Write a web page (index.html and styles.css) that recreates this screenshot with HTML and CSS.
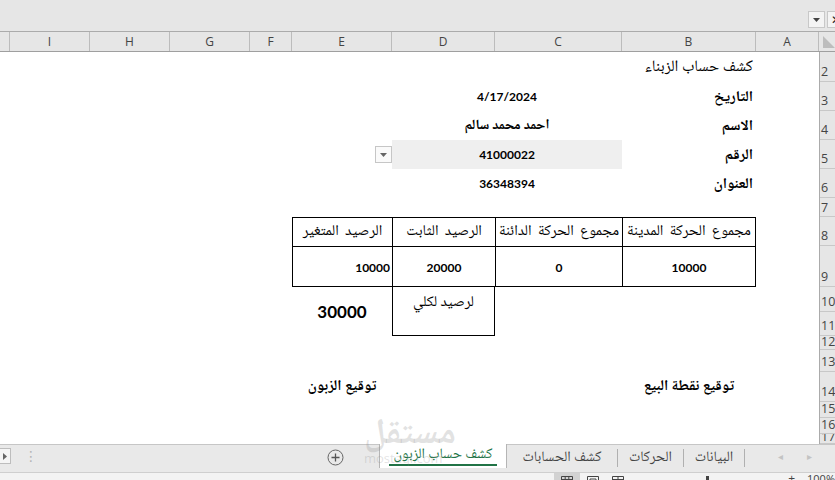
FILE: index.html
```html
<!DOCTYPE html>
<html lang="ar">
<head>
<meta charset="utf-8">
<title>كشف حساب الزبون</title>
<link rel="stylesheet" href="styles.css">
</head>
<body>
<div class="app">
  <div class="fbar">
    <div class="fspacer"></div>
    <div class="fbox"><svg width="7" height="4" viewBox="0 0 7 4"><path d="M0 0H7L3.5 4Z" fill="#444"/></svg></div>
    <div class="fbox x">✕</div>
  </div>

  <div class="colhead">
    <div class="ch"></div>
    <div class="ch">I</div>
    <div class="ch">H</div>
    <div class="ch">G</div>
    <div class="ch">F</div>
    <div class="ch">E</div>
    <div class="ch">D</div>
    <div class="ch">C</div>
    <div class="ch">B</div>
    <div class="ch">A</div>
    <div class="corner"><svg width="14" height="14" viewBox="0 0 14 14"><path d="M2 2L14 14H2Z" fill="#bdbdbd"/></svg></div>
  </div>

  <div class="body">
    <div class="sheet">
      <div class="cell c-b r2 title ar">كشف حساب الزبناء</div>

      <div class="cell c-b r3 lbl ar">التاريخ</div>
      <div class="cell c-cd r3 val num">4/17/2024</div>

      <div class="cell c-b r4 lbl ar">الاسم</div>
      <div class="cell c-cd r4 val arb">احمد محمد سالم</div>

      <div class="cell c-b r5 lbl ar">الرقم</div>
      <div class="cell c-cd r5 val num sel">41000022</div>
      <div class="cell c-e r5 ddcell"><div class="dd"><svg width="7" height="4" viewBox="0 0 7 4"><path d="M0 0H7L3.5 4Z" fill="#666"/></svg></div></div>

      <div class="cell c-b r6 lbl ar">العنوان</div>
      <div class="cell c-cd r6 val num">36348394</div>

      <div class="cell c-e r8 th bd ar">الرصيد المتغير</div>
      <div class="cell c-d r8 th bd ar">الرصيد الثابت</div>
      <div class="cell c-c r8 th bd ar">مجموع الحركة الدائنة</div>
      <div class="cell c-b r8 th bd bdr ar">مجموع الحركة المدينة</div>

      <div class="cell c-e r9 td bd bdb num right">10000</div>
      <div class="cell c-d r9 td bd bdb num">20000</div>
      <div class="cell c-c r9 td bd bdb num">0</div>
      <div class="cell c-b r9 td bd bdb bdr num">10000</div>

      <div class="cell c-e r1011 total num">30000</div>
      <div class="cell c-d r1011 box ar">لرصيد لكلي</div>

      <div class="cell c-b r14 sig ar">توقيع نقطة البيع</div>
      <div class="cell c-e r14 sig ar">توقيع الزبون</div>
    </div>

    <div class="rowhead">
      <div class="rh h30">2</div>
      <div class="rh h29">3</div>
      <div class="rh h29">4</div>
      <div class="rh h29">5</div>
      <div class="rh h29">6</div>
      <div class="rh h19">7</div>
      <div class="rh h29">8</div>
      <div class="rh h41">9</div>
      <div class="rh h25">10</div>
      <div class="rh h24">11</div>
      <div class="rh h14">12</div>
      <div class="rh h22">13</div>
      <div class="rh h30">14</div>
      <div class="rh h16">15</div>
      <div class="rh h16">16</div>
      <div class="rh h10">17</div>
    </div>
  </div>

  <div class="tabs">
    <div class="navbox"><svg width="4" height="7" viewBox="0 0 4 7"><path d="M0 0L4 3.5L0 7Z" fill="#666"/></svg></div>
    <div class="dots">⋮</div>
    <div class="tspacer"></div>
    <div class="plus"><svg width="17" height="17" viewBox="0 0 17 17"><circle cx="8.5" cy="8.5" r="7.5" fill="none" stroke="#666" stroke-width="1"/><path d="M8.5 4.5V12.5M4.5 8.5H12.5" stroke="#555" stroke-width="1.3"/></svg></div>
    <div class="tab active ar"><span class="tlabel">كشف حساب الزبون</span></div>
    <div class="tab t1 ar"><span class="tlabel">كشف الحسابات</span></div>
    <div class="tab t2 ar"><span class="tlabel">الحركات</span></div>
    <div class="tab t3 ar"><span class="tlabel">البيانات</span></div>
    <div class="arrows"><span>◂</span><span>▸</span></div>
  </div>

  <div class="status">
    <div class="sspacer"></div>
    <div class="vbtn on"><svg width="12" height="10" viewBox="0 0 12 10"><path d="M0.5 0.5H11.5V10M0.5 0.5V10M4.2 0.5V10M7.8 0.5V10M0.5 3.5H11.5" fill="none" stroke="#444" stroke-width="1"/></svg></div>
    <div class="vbtn"><svg width="12" height="10" viewBox="0 0 12 10"><path d="M0.5 0.5H11.5V10M0.5 0.5V10M3 3H9V10M3 3V10" fill="none" stroke="#444" stroke-width="1"/></svg></div>
    <div class="vbtn"><svg width="12" height="10" viewBox="0 0 12 10"><path d="M0.5 0.5H11.5V10M0.5 0.5V10M6 0.5V10M0.5 3.5H11.5" fill="none" stroke="#444" stroke-width="1"/></svg></div>
    <div class="zoomline"><span class="thumb"></span></div>
    <div class="zplus">+</div>
    <div class="zpct">100%</div>
  </div>

  <div class="watermark"><div class="wm1 ar">مستقل</div><div class="wm2">mostaql.com</div></div>
</div>
</body>
</html>
```
FILE: styles.css
```css
* { box-sizing: border-box; }
html, body { margin: 0; padding: 0; }
body { width: 835px; height: 480px; overflow: hidden; background: #fff; }

.app {
  position: relative;
  width: 835px;
  height: 480px;
  overflow: hidden;
  display: flex;
  flex-direction: column;
  font-family: "Open Sans", "DejaVu Sans", sans-serif;
  color: #000;
}

.ar { font-family: "Noto Naskh Arabic", "Noto Sans Arabic", "DejaVu Sans", sans-serif; direction: rtl; }
.arb { font-family: "Noto Naskh Arabic", "Noto Sans Arabic", "DejaVu Sans", sans-serif; direction: rtl; font-weight: bold; font-size: 14px; }
.num { font-family: Lato, "Liberation Sans", sans-serif; font-weight: bold; font-size: 12px; }

/* formula bar strip */
.fbar {
  flex: 0 0 32px;
  background: #e6e6e6;
  border-bottom: 1px solid #ababab;
  display: flex;
  align-items: flex-start;
  padding-top: 11px;
  gap: 2px;
  margin-right: -14px;
}
.fspacer { flex: 1; }
.fbox {
  flex: 0 0 auto;
  width: 17px;
  height: 17px;
  border: 1px solid #c8c8c8;
  background: #f4f4f4;
  display: flex;
  align-items: center;
  justify-content: center;
}
.fbox.x { width: 22px; font-size: 12px; font-weight: bold; color: #222; justify-content: flex-start; padding-left: 3px; }

/* column headers */
.colhead {
  flex: 0 0 20px;
  display: grid;
  grid-template-columns: 10px 80px 80px 80px 42px 100px 103px 127px 134px 63px 30px;
  width: 849px;
  background: #e6e6e6;
  border-bottom: 1px solid #9f9f9f;
}
.ch {
  border-right: 1px solid #bcbcbc;
  font-size: 12px;
  color: #444;
  display: flex;
  align-items: center;
  justify-content: center;
}
.corner { display: flex; align-items: flex-start; padding-top: 2px; padding-left: 2px; }

/* body */
.body { flex: 0 0 392px; display: flex; width: 849px; }
.sheet {
  flex: 0 0 819px;
  display: grid;
  grid-template-columns: 10px 80px 80px 80px 42px 100px 103px 127px 134px 63px;
  grid-template-rows: 30px 29px 29px 29px 29px 19px 29px 41px 25px 24px 14px 22px 30px 16px 16px 10px;
  background: #fff;
}
.rowhead {
  flex: 0 0 30px;
  background: #e6e6e6;
  border-left: 1px solid #ababab;
  display: flex;
  flex-direction: column;
}
.rh {
  border-bottom: 1px solid #c8c8c8;
  font-size: 12.5px;
  color: #444;
  display: flex;
  align-items: flex-end;
  padding-left: 1px;
  padding-bottom: 3px;
  line-height: 1;
  overflow: hidden;
}
.h30 { height: 30px; } .h29 { height: 29px; } .h19 { height: 19px; padding-bottom: 2px; }
.h41 { height: 41px; } .h25 { height: 25px; } .h24 { height: 24px; } .h14 { height: 14px; padding-bottom: 1px; }
.h22 { height: 22px; } .h16 { height: 16px; padding-bottom: 2px; } .h10 { height: 10px; padding-bottom: 0; }

/* grid placement */
.c-b { grid-column: 9; }
.c-c { grid-column: 8; }
.c-d { grid-column: 7; }
.c-e { grid-column: 6; }
.c-cd { grid-column: 7 / 9; }
.r2 { grid-row: 1; } .r3 { grid-row: 2; } .r4 { grid-row: 3; } .r5 { grid-row: 4; } .r6 { grid-row: 5; }
.r8 { grid-row: 7; } .r9 { grid-row: 8; } .r1011 { grid-row: 9 / 11; } .r14 { grid-row: 13; }

.cell { display: flex; align-items: center; justify-content: center; white-space: nowrap; }

.title { justify-content: flex-start; padding-right: 3px; font-size: 16px; }
.lbl { justify-content: flex-start; padding-right: 3px; font-size: 15px; font-weight: bold; padding-top: 2px; }
.val { padding-top: 0; }
.sel { background: #efefef; }
.ddcell { justify-content: flex-end; align-items: flex-start; padding-top: 6px; }
.dd {
  width: 17px; height: 17px;
  border: 1px solid #c6c6c6;
  background: #fafafa;
  display: flex; align-items: center; justify-content: center;
}

.bd { border-top: 1px solid #000; border-left: 1px solid #000; }
.bdr { border-right: 1px solid #000; }
.bdb { border-bottom: 1px solid #000; }
.th { font-size: 15px; word-spacing: 3px; }
.right { justify-content: flex-start; direction: rtl; padding-right: 2px; }
.td { padding-top: 2px; }

.total { font-size: 17px; }
.box {
  border-left: 1px solid #000;
  border-right: 1px solid #000;
  border-bottom: 1px solid #000;
  align-items: flex-start;
  padding-top: 3px;
  font-size: 15px;
}
.sig { font-size: 15px; font-weight: bold; align-items: center; }

/* sheet tabs */
.tabs {
  flex: 0 0 28px;
  background: #e9e9e9;
  border-top: 1px solid #c6c6c6;
  display: flex;
  align-items: flex-start;
}
.navbox {
  flex: 0 0 auto;
  width: 11px; height: 16px;
  margin-top: 3px;
  border: 1px solid #bdbdbd;
  border-left: none;
  background: #f5f5f5;
  display: flex; align-items: center; justify-content: center;
}
.dots { margin-left: 13px; margin-top: 2px; color: #b5b5b5; font-size: 14px; line-height: 18px; }
.tspacer { flex: 1; }
.plus { margin-top: 4px; margin-right: 35px; display: flex; }
.tab {
  flex: 0 0 auto;
  height: 22px;
  margin-top: 2px;
  display: flex;
  align-items: center;
  justify-content: center;
  font-size: 14.5px;
  color: #444;
}
.tab .tlabel { padding-bottom: 1px; }
.tab.active {
  width: 128px;
  margin-top: -1px;
  height: 24px;
  background: #fff;
  color: #217346;
  border-left: 1px solid #b5b5b5;
  border-right: 1px solid #b5b5b5;
  align-items: flex-start;
  padding-top: 1px;
}
.tab.active .tlabel { border-bottom: 2px solid #217346; padding: 0 4px 0; line-height: 19px; }
.t1, .t2, .t3 { border-right: 1px solid #b0b0b0; height: 18px; margin-top: 4px; }
.t1 { width: 111px; }
.t2 { width: 66px; }
.t3 { width: 61px; }
.arrows {
  flex: 0 0 90px;
  display: flex;
  gap: 24px;
  padding-left: 33px;
  margin-top: 3px;
  color: #c3c3c3;
  font-size: 10px;
  line-height: 16px;
}

/* status bar */
.status {
  flex: 0 0 26px;
  background: #f3f3f3;
  border-top: 1px solid #cfcfcf;
  display: flex;
  align-items: flex-start;
}
.sspacer { flex: 0 0 554px; }
.vbtn { width: 37px; height: 20px; display: flex; justify-content: center; padding-top: 3px; }
.vbtn.on { background: #d2d2d2; }
.zoomline { flex: 0 0 155px; position: relative; height: 20px; }
.thumb { position: absolute; left: 75px; top: 3px; width: 3px; height: 8px; background: #444; }
.zplus { font-size: 12px; color: #444; line-height: 12px; margin-left: 2px; }
.zpct { font-size: 11px; color: #444; line-height: 12px; margin-left: 12px; }

/* watermark */
.watermark {
  position: absolute;
  left: 364px;
  top: 418px;
  pointer-events: none;
  color: rgba(140, 140, 140, 0.25);
  text-align: left;
}
.wm1 { font-size: 36px; font-weight: bold; line-height: 36px; }
.wm2 { font-family: "Open Sans", sans-serif; font-size: 13px; line-height: 12px; margin-top: -2px; }
```
